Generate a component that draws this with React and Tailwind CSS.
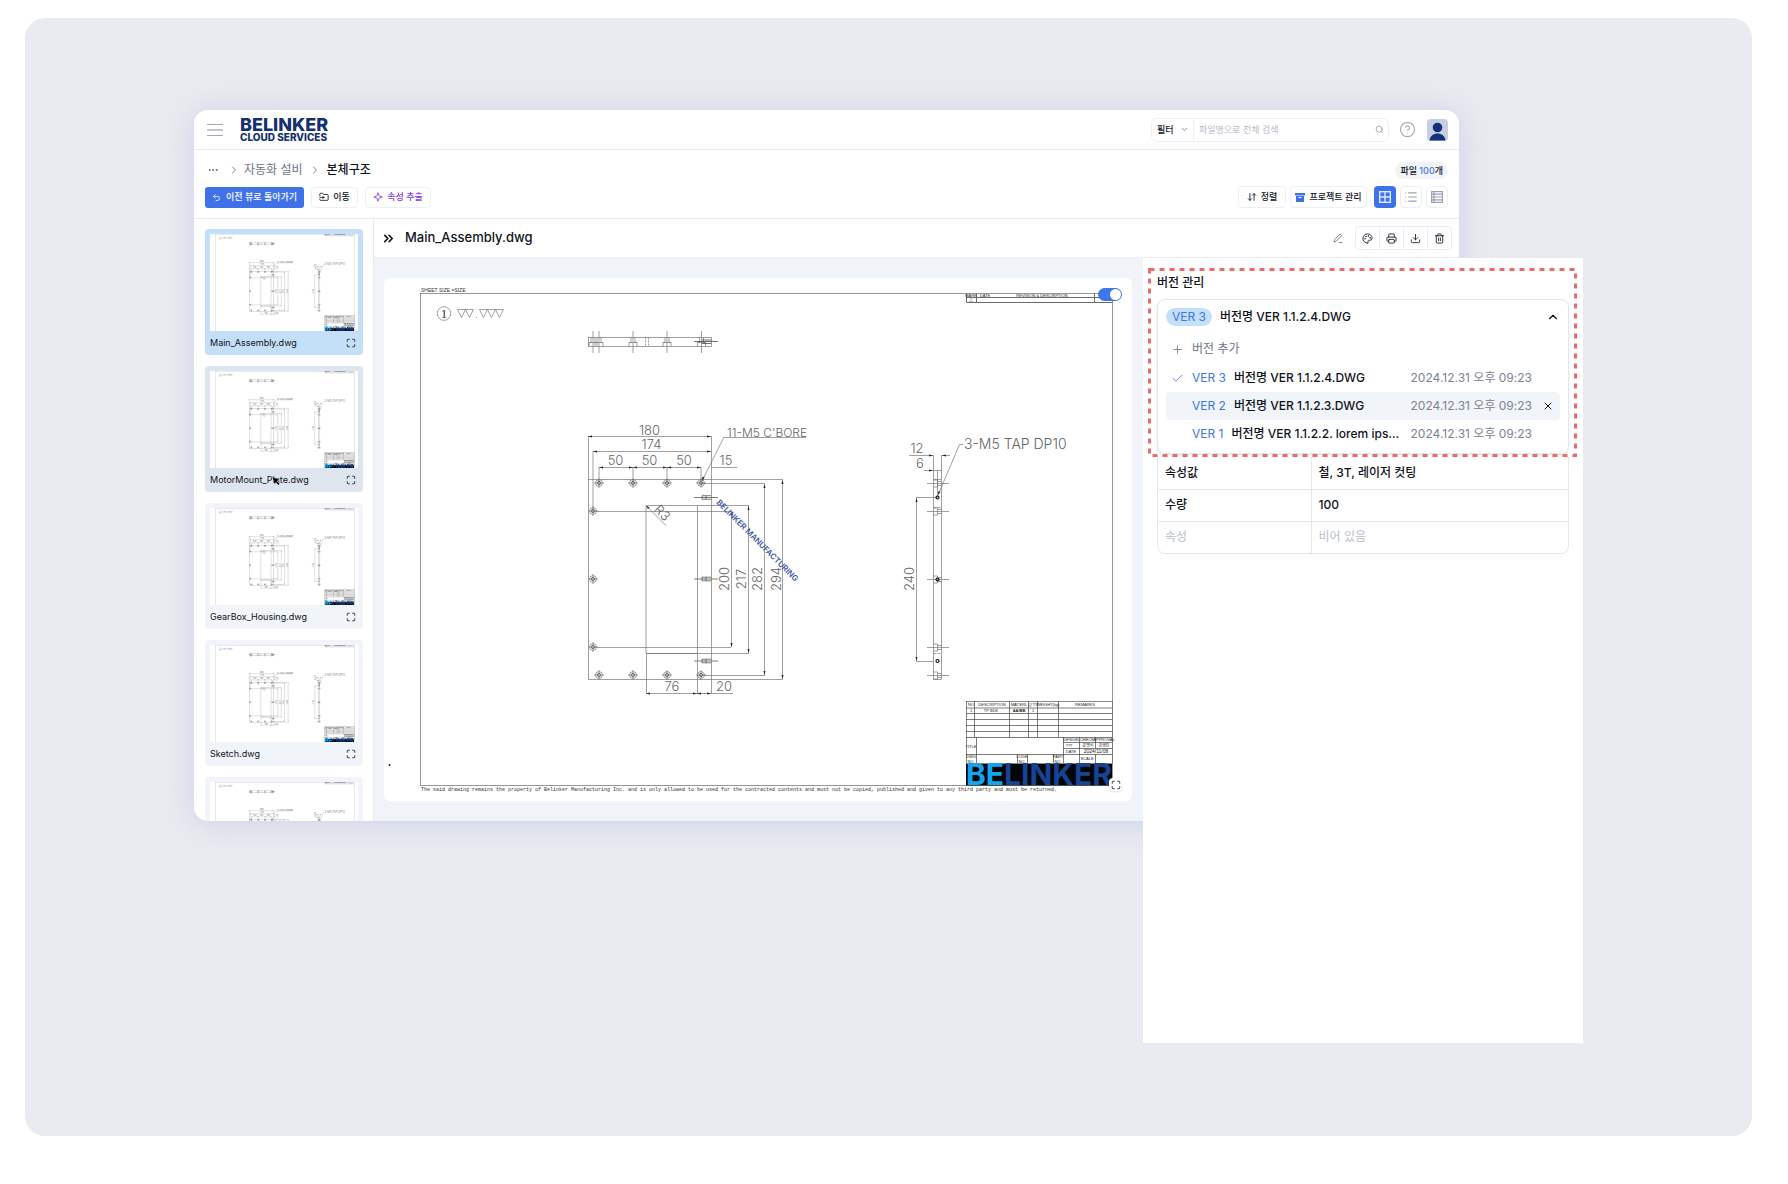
import { useState } from "react";
import {
  ArrowDownUp,
  Check,
  ChevronDown,
  ChevronRight,
  ChevronUp,
  ChevronsRight,
  CircleHelp,
  Download,
  Ellipsis,
  FolderInput,
  List,
  Maximize,
  Palette,
  Plus,
  Printer,
  Search,
  Sparkle,
  Trash2,
  Undo2,
  X
} from "lucide-react";

const files = [
  "Main_Assembly.dwg",
  "MotorMount_Plate.dwg",
  "GearBox_Housing.dwg",
  "Sketch.dwg",
  "Bracket.dwg"
];

const versions = [
  { id: 3, name: "버전명 VER 1.1.2.4.DWG", date: "2024.12.31 오후 09:23" },
  { id: 2, name: "버전명 VER 1.1.2.3.DWG", date: "2024.12.31 오후 09:23" },
  { id: 1, name: "버전명 VER 1.1.2.2. lorem ips...", date: "2024.12.31 오후 09:23" }
];

const attributes = [
  { label: "속성값", value: "철, 3T, 레이저 컷팅" },
  { label: "수량", value: "100" },
  { label: "속성", value: "비어 있음", empty: true }
];

export default function App() {
  const [selected, setSelected] = useState(0);

  return (
    <div className="bg-white pt-[18px] pl-[25px] pr-9 pb-12 font-['Inter','Noto_Sans_CJK_KR',sans-serif] text-[#10131c]">
      <main className="rounded-[20px] bg-[#eaebf0] px-[169px] pt-[92px] pb-[93px] grid grid-cols-[minmax(0,1fr)_316px_124px]">

        {/* WINDOW */}
        <div className="col-start-1 col-span-2 row-start-1 self-start bg-white rounded-[14px] overflow-hidden shadow-[0_2px_32px_rgba(130,145,215,0.3)]">
          <Header />
          <Toolbar />

          <div className="flex">
            <aside className="w-[180px] shrink-0 contain-size overflow-hidden border-r border-[#e6eaf1] pl-[11px] pt-[10px] flex flex-col gap-[11px]">
              {files.map((name, index) => (
                <FileCard
                  key={name}
                  name={name}
                  index={index}
                  active={selected === index}
                  onSelect={() => setSelected(index)}
                />
              ))}
            </aside>

            <section className="flex-1 min-w-0">
              <ViewerHeader name={files[selected]} />
              <div className="bg-[#f0f4f8] pt-5 pb-5 pl-[10px] pr-[327px]">
                <div className="relative bg-white rounded-md">
                  <Drawing viewBox="384 278 748 523" line={1} />
                  <input
                    type="checkbox"
                    role="switch"
                    aria-label="레이어 표시"
                    defaultChecked
                    className="absolute right-[10px] top-[10px] appearance-none w-6 h-[13px] rounded-full bg-[#3f76ec] flex items-center justify-end pr-px after:block after:w-[11px] after:h-[11px] after:rounded-full after:bg-white"
                  />
                  <button
                    aria-label="전체 화면"
                    className="absolute right-[10px] bottom-[10px] w-[13px] h-[13px] bg-white rounded-sm shadow flex items-center justify-center"
                  >
                    <Maximize size={10} strokeWidth={2} />
                  </button>
                </div>
              </div>
            </section>
          </div>
        </div>

        {/* PANEL */}
        <VersionPanel />
      </main>
    </div>
  );
}

// HEADER

function Header() {
  return (
    <header className="h-10 border-b border-[#e9edf3] flex items-center pl-[13px] pr-[11px]">
      <button aria-label="메뉴" className="w-4 flex flex-col gap-1">
        <span className="h-[1px] bg-[#a3a7ba]" />
        <span className="h-[2px] bg-[#c3c6d3]" />
        <span className="h-[1px] bg-[#a3a7ba]" />
      </button>

      <a href="#" className="ml-[17px] flex flex-col text-[#143070] font-extrabold">
        <span className="text-[18px] leading-[15px]">BELINKER</span>
        <span className="text-[10px] leading-[11px]">CLOUD SERVICES</span>
      </a>

      <div className="ml-auto w-[238px] h-6 border border-[#edf0f5] rounded-md flex items-center">
        <div className="relative w-[42px] h-full border-r border-[#edf0f5] flex items-center">
          <select aria-label="필터" className="appearance-none w-full pl-[5px] text-[9px] font-medium bg-transparent">
            <option>필터</option>
          </select>
          <ChevronDown size={9} strokeWidth={2} className="absolute right-1 text-[#6d7385] pointer-events-none" />
        </div>
        <input
          type="text"
          aria-label="파일명 검색"
          placeholder="파일명으로 전체 검색"
          className="flex-1 min-w-0 pl-[5px] text-[9px] outline-none placeholder:text-[#b5bac8]"
        />
        <Search size={9} strokeWidth={2} className="mr-1 text-[#9298ab]" />
      </div>

      <button aria-label="도움말" className="ml-[10px] text-[#9ba1b8]">
        <CircleHelp size={17} strokeWidth={1.5} />
      </button>
      <button aria-label="프로필" className="ml-[11px]">
        <svg width="21" height="22" viewBox="0 0 21 22">
          <rect width="21" height="22" rx="4" fill="#c6cfe2" />
          <circle cx="10.5" cy="8.5" r="4.8" fill="#16317a" />
          <path d="M2.5 21.5C3 17 6.500 14.500 10.500 14.500S18 17 18.500 21.500Z" fill="#16317a" />
        </svg>
      </button>
    </header>
  );
}

function Toolbar() {
  return (
    <div className="h-[69px] border-b border-[#e9edf3] pt-[11px] pl-[11px] pr-[11px]">
      <div className="h-[18px] flex items-center justify-between">
        <nav className="flex items-center text-[12px]">
          <button aria-label="상위 폴더" className="ml-[2px] text-[#5c6375]">
            <Ellipsis size={12} strokeWidth={2} />
          </button>
          <ChevronRight size={12} strokeWidth={2} className="ml-[9px] text-[#7d8496]" />
          <a href="#" className="ml-[4px] text-[#6d7488]">자동화 설비</a>
          <ChevronRight size={12} strokeWidth={2} className="ml-[6px] text-[#7d8496]" />
          <span className="ml-[6px] font-medium">본체구조</span>
        </nav>
        <span className="h-[17px] px-[5px] rounded-full bg-[#f0f3f8] text-[9px] leading-[17px] font-medium">
          파일 <span className="text-[#3f76ec]">100</span>개
        </span>
      </div>

      <div className="mt-[7px] h-[22px] flex items-center text-[9px] font-medium whitespace-nowrap">
        <button className="h-[21px] w-[99px] rounded-[3px] bg-[#3f72e8] text-white flex items-center justify-center gap-[5px]">
          <Undo2 size={9} strokeWidth={2} />
          이전 뷰로 돌아가기
        </button>
        <button className="ml-[7px] h-[21px] w-[47px] rounded-[4px] border border-[#eceff4] flex items-center justify-center gap-1">
          <FolderInput size={10} strokeWidth={2} />
          이동
        </button>
        <button className="ml-[7px] h-[21px] w-[66px] rounded-[4px] border border-[#eceff4] text-[#8a3ddb] flex items-center justify-center gap-1">
          <Sparkle size={10} strokeWidth={2} />
          속성 추출
        </button>

        <button className="ml-auto h-[22px] w-12 rounded-[4px] border border-[#eceff4] flex items-center justify-center gap-1">
          <ArrowDownUp size={10} strokeWidth={2} />
          정렬
        </button>
        <button className="ml-1 h-[22px] w-[77px] rounded-[4px] border border-[#eceff4] flex items-center justify-center gap-1">
          <svg width="10" height="9" viewBox="0 0 10 9" fill="#3f72e8">
            <path d="M0 0h10v2.500H0z" />
            <path d="M1 3h8v6H1z" />
            <path d="M3.500 4.500h3" stroke="#fff" strokeWidth="1" />
          </svg>
          프로젝트 관리
        </button>
        <button aria-label="그리드 보기" className="ml-[7px] w-[22px] h-[22px] rounded-[4px] bg-[#3f72e8] flex items-center justify-center">
          <svg width="12" height="12" viewBox="0 0 12 12" fill="none" stroke="#dfe9ff" strokeWidth="1.4">
            <rect x="0.700" y="0.700" width="10.600" height="10.600" />
            <path d="M6 0v12M0 6h12" />
          </svg>
        </button>
        <button aria-label="목록 보기" className="ml-1 w-[22px] h-[22px] rounded-[4px] border border-[#eceff4] text-[#9ba1b8] flex items-center justify-center">
          <List size={14} strokeWidth={2} />
        </button>
        <button aria-label="표 보기" className="ml-1 w-[22px] h-[22px] rounded-[4px] border border-[#eceff4] flex items-center justify-center">
          <svg width="12" height="12" viewBox="0 0 12 12" fill="none" stroke="#9ba1b8" strokeWidth="1.200">
            <rect x="0.600" y="0.600" width="10.800" height="10.800" />
            <path d="M3 0v12M0 3.200h12M0 6h12M0 8.800h12" />
          </svg>
        </button>
      </div>
    </div>
  );
}

// SIDEBAR

function FileCard({ name, index, active, onSelect }) {
  const color = active ? "bg-[#c3e0f8]" : index === 1 ? "bg-[#dfe5ef]" : "bg-[#f1f4f8]";
  return (
    <div className={`relative w-[158px] h-[126px] shrink-0 rounded-[4px] p-[5px] ${color}`}>
      <button onClick={onSelect} aria-label={name} className="block w-full bg-white">
        <Drawing viewBox="392 293 740 485" line={1.6} thumb />
      </button>
      <div className="h-[23px] pr-[2px] flex items-center justify-between text-[9px]">
        <span>{name}</span>
        <button aria-label="크게 보기"><Maximize size={10} strokeWidth={2} /></button>
      </div>
      {index === 1 && (
        <svg width="10" height="10" viewBox="0 0 10 10" className="absolute left-[66px] top-[110px]">
          <path d="M1 0.500 9 3.800 6.200 5 8.800 7.800 7.400 9.200 4.900 6.500 3.700 9Z" fill="#05070c" stroke="#fff" strokeWidth="0.500" />
        </svg>
      )}
    </div>
  );
}

// VIEWER

function ViewerHeader({ name }) {
  return (
    <div className="h-[39px] border-b border-[#e9edf3] flex items-center pl-[7px] pr-[7px]">
      <button aria-label="패널 접기"><ChevronsRight size={15} strokeWidth={2.5} /></button>
      <h1 className="ml-[9px] text-[13px] font-medium">{name}</h1>

      <button aria-label="이름 수정" className="ml-auto mr-3 text-[#70778a]">
        <svg width="10" height="10" viewBox="0 0 10 10" fill="none" stroke="currentColor" strokeWidth="0.900">
          <path d="M1 9 1.600 6.700 7 0.900 8.700 2.500 3.200 8.200ZM6 9.400h3.500" />
        </svg>
      </button>
      <div className="h-6 flex border border-[#e9edf3] rounded-[4px] divide-x divide-[#e9edf3] text-[#222733]">
        <button aria-label="색상" className="w-6 flex items-center justify-center"><Palette size={11} strokeWidth={2} /></button>
        <button aria-label="인쇄" className="w-6 flex items-center justify-center"><Printer size={11} strokeWidth={2} /></button>
        <button aria-label="다운로드" className="w-6 flex items-center justify-center"><Download size={11} strokeWidth={2} /></button>
        <button aria-label="삭제" className="w-[23px] flex items-center justify-center"><Trash2 size={11} strokeWidth={2} /></button>
      </div>
    </div>
  );
}

// VERSION PANEL

function VersionPanel() {
  return (
    <section className="col-start-2 col-span-2 row-start-1 mt-[148px] min-h-[785px] bg-white z-10 pt-[10px] pl-[5px] pr-[6px]">
      <div className="relative pl-[9px] pr-2 pt-[6px] pb-1">
        <h2 className="text-[12px] leading-[18px] font-medium">버전 관리</h2>

        <div className="mt-[7px] -mb-px border border-[#e3e8f0] rounded-lg px-2 pt-2 pb-[5px] shadow-sm text-[12px] leading-[18px] whitespace-nowrap">
          <button className="w-full flex items-center font-medium">
            <span className="h-[18px] px-[6px] rounded-full bg-[#c3e0f8] text-[#3f76ec] font-normal">VER 3</span>
            <span className="ml-2">버전명 VER 1.1.2.4.DWG</span>
            <ChevronUp size={14} strokeWidth={2} className="ml-auto" />
          </button>

          <button className="mt-[9px] h-7 flex items-center text-[#6d7488]">
            <Plus size={13} strokeWidth={1.5} className="ml-[5px] mr-2" />
            버전 추가
          </button>

          <ul className="mt-px">
            {versions.map((v) => (
              <li
                key={v.id}
                className={`h-7 flex items-center rounded-[4px] ${v.id === 2 ? "bg-[#f1f4f8]" : ""}`}
              >
                <span className="w-[26px] shrink-0 pl-[5px] text-[#3f76ec]">
                  {v.id === 3 && <Check size={13} strokeWidth={1.5} />}
                </span>
                <span className="text-[#3f76ec]">VER {v.id}</span>
                <span className="ml-2 font-medium">{v.name}</span>
                <span className="ml-auto text-[#7c8294]">{v.date}</span>
                <span className="w-7 shrink-0 pl-[10px]">
                  {v.id === 2 && (
                    <button aria-label="버전 삭제" className="block"><X size={12} strokeWidth={2} /></button>
                  )}
                </span>
              </li>
            ))}
          </ul>
        </div>

        {/* highlight frame */}
        <svg className="absolute inset-0 w-full h-full pointer-events-none overflow-visible" fill="none" stroke="#ec6b6b" strokeWidth="3" strokeDasharray="5 5">
          <rect x="1.5" y="1.5" className="w-[calc(100%-3px)] h-[calc(100%-3px)]" />
        </svg>
      </div>

      <div className="ml-[9px] mr-2 border border-t-0 border-[#e3e8f0] rounded-b-lg">
        <table className="w-full text-[12px] leading-[18px]">
          <tbody>
            {attributes.map((a) => (
              <tr
                key={a.label}
                className={`h-8 not-last:border-b border-[#e3e8f0] ${a.empty ? "text-[#b9bfcc]" : ""}`}
              >
                <th scope="row" className={`w-[153px] pl-[7px] text-left border-r border-[#e3e8f0] ${a.empty ? "font-normal" : "font-medium"}`}>{a.label}</th>
                <td className={`pl-[7px] ${a.empty ? "font-normal" : "font-medium"}`}>{a.value}</td>
              </tr>
            ))}
          </tbody>
        </table>
      </div>
    </section>
  );
}

// DRAWING

function Dim({ x1, y1, x2, y2 }) {
  const flat = y1 === y2;
  return (
    <>
      <path d={`M${x1} ${y1}L${x2} ${y2}`} />
      {flat ? (
        <path fill="#222" stroke="none" d={`M${x1} ${y1}l4 -1v2zM${x2} ${y2}l-4 -1v2z`} />
      ) : (
        <path fill="#222" stroke="none" d={`M${x1} ${y1}l-1 4h2zM${x2} ${y2}l-1 -4h2z`} />
      )}
    </>
  );
}

function Hole({ x, y }) {
  return (
    <>
      <circle cx={x} cy={y} r="3.4" />
      <circle cx={x} cy={y} r="1.6" strokeWidth="0.8" stroke="#444" />
      <path d={`M${x - 5} ${y}h10M${x} ${y - 5}v10`} />
    </>
  );
}

// vertical dimension label, read from the bottom up
function VText({ x, y, children }) {
  return <text transform={`translate(${x} ${y}) rotate(-90)`} textAnchor="middle">{children}</text>;
}

const holes = [
  [599, 483], [633, 483], [667, 483], [701, 483],
  [593, 511], [593, 579], [593, 647],
  [599, 675], [633, 675], [667, 675], [701, 675]
];

function Drawing({ viewBox, line, thumb }) {
  return (
    <svg viewBox={viewBox} className="block w-full" fill="none" stroke="#777" strokeWidth={line * 0.7}>
      {/* frame */}
      <g stroke={thumb ? "#999" : "#6b6b6b"}>
        <rect x="420.5" y="293.5" width="692" height="492" />
        <path strokeWidth={line} d="M966.5 293.5v9h146M966.5 297.5h146M976.500 293.500v9M1094.500 293.500v9" />
      </g>
      <circle cx="444" cy="313.500" r="6.800" />
      <path d="M457.500 309.500h8l-4 8zM465.500 309.500h8l-4 8zM479.500 309.500h8l-4 8zM487.500 309.500h8l-4 8zM495.500 309.500h8l-4 8zM476 317.500h1" />
      <circle cx="389.500" cy="765" r="0.900" fill="#111" stroke="none" />

      {/* top view */}
      <rect x="588.500" y="337.500" width="123" height="9" />
      {[593, 599, 633, 667, 701.5].map((x) => (
        <path key={x} d={`M${x} 331v22M${x - 2} 337.500v5h-2v4M${x + 2} 337.500v5h2v4M${x - 4} 342.500h8`} />
      ))}
      <path strokeDasharray="2 1" d="M645.500 337.500v9M648.500 337.500v9" />
      <path stroke="#333" d="M694 341.500h24M702 340h9M702 343.500h9" />

      {/* front view */}
      <rect x="588.500" y="479.500" width="123" height="200" />
      <rect x="646" y="505.500" width="51.500" height="148" rx="1.500" />
      {holes.map(([x, y]) => <Hole key={`${x}-${y}`} x={x} y={y} />)}
      {[497.5, 579, 661].map((y) => (
        <path key={y} stroke="#444" d={`M694 ${y}h24M702 ${y - 1.800}h9M702 ${y + 1.800}h9M702 ${y - 1.800}v3.600M706 ${y - 1.800}v3.600`} />
      ))}
      <path d="M588.500 436v43M711.500 436v43M593 451v60M599 467v16M633 467v16M667 467v16M701 467v16" />
      <path d="M711.500 467.500h26M724 437.500h82M724 437l-22 44" />
      <path d="M593 511.500h138M593 647.500h138M697 505.500h52M646 653.500h103M701 483.500h64M701 675.500h64M711 479.500h72M711 679.500h72" />
      <path d="M646.500 653v41M697.500 653v41M711.500 679v15M711 693.500h22M646 505.500l20 20" />
      <Dim x1={588} y1={436.5} x2={711} y2={436.5} />
      <Dim x1={593} y1={451.5} x2={711} y2={451.5} />
      <Dim x1={599} y1={467.5} x2={633} y2={467.5} />
      <Dim x1={633} y1={467.5} x2={667} y2={467.5} />
      <Dim x1={667} y1={467.5} x2={701} y2={467.5} />
      <Dim x1={731.5} y1={511} x2={731.5} y2={647} />
      <Dim x1={748.5} y1={506} x2={748.5} y2={653} />
      <Dim x1={764.5} y1={484} x2={764.5} y2={675} />
      <Dim x1={782.5} y1={480} x2={782.5} y2={679} />
      <Dim x1={646} y1={693.5} x2={697} y2={693.5} />
      <Dim x1={697} y1={693.5} x2={711} y2={693.5} />
      <path fill="#222" stroke="none" d="M702 481l0.500 -4.500 2 1zM646 505.500l3.500 2 -1.500 1.500z" />

      {/* side view */}
      <rect x="933.500" y="479.500" width="8" height="200" />
      <path d="M933.500 455v24M941.500 455v24M909 455.500h24M942 455.500h8M924 470.500h18M937.500 470.500v27M916 497.500h21M916 661.500h17" />
      <path d="M963 444.500h-3.500L937 497.500" />
      {[483.5, 511.5, 579.5, 647.5, 675.5].map((y) => (
        <path key={y} d={`M927 ${y}h22M933.500 ${y - 3.500}h4v7h-4M937.500 ${y - 2}h4M937.500 ${y + 2}h4`} />
      ))}
      {[497.5, 579.5, 661].map((y) => (
        <circle key={y} cx="937.500" cy={y} r="1.500" stroke="#111" strokeWidth="1.200" />
      ))}
      <path strokeDasharray="3 1" d="M933.500 507.500h8M933.500 653.500h8" />
      <path fill="#222" stroke="none" d="M933 455.500l-4 -1v2zM942 455.500l4 -1v2zM933 470.500l-4 -1v2zM938 495l0.500 -4 2 1z" />
      <Dim x1={916.5} y1={498} x2={916.5} y2={661} />

      {/* dimension labels */}
      <g fill="#666" stroke="none" className="font-['Inter'] text-[13px] font-light" textAnchor="middle">
        <text x="649.500" y="435">180</text>
        <text x="651.500" y="449">174</text>
        <text x="615.500" y="465">50</text>
        <text x="649.500" y="465">50</text>
        <text x="684" y="465">50</text>
        <text x="726" y="465">15</text>
        <text x="672" y="691">76</text>
        <text x="724" y="691">20</text>
        <text x="917" y="453">12</text>
        <text x="920" y="468">6</text>
        <VText x={729} y={579}>200</VText>
        <VText x={746} y={579}>217</VText>
        <VText x={762} y={579}>282</VText>
        <VText x={781} y={579}>294</VText>
        <VText x={914} y={579}>240</VText>
        <text transform="translate(659 516) rotate(45)">R3</text>
        <text x="964" y="449" textAnchor="start" className="text-[14px]">3-M5 TAP DP10</text>
        <text x="727" y="437" textAnchor="start" className="text-[12px]">11-M5 C'BORE</text>
      </g>
      {!thumb && (
        <text transform="translate(716 503) rotate(45)" fill="#3f5aa8" stroke="none" className="font-['Inter'] text-[8px] font-semibold">
          BELINKER MANUFACTURING
        </text>
      )}

      {/* title block */}
      <rect x="966.500" y="701.500" width="146" height="62" fill="#fff" stroke="#555" />
      <path
        stroke="#444"
        d="M966 708h146M966 713.500h146M966 719.500h146M966 725.500h146M966 731.500h146M966 737.500h146M974.500 701v36M1009.500 701v36M1028.500 701v36M1037.500 701v36M1058.500 701v36M976.500 737v26M1063.500 737v26M1079.500 737v26M1095.500 737v11M1095.500 754v9M1063 742.500h49M1063 748.500h49M966 754.500h146M1017.500 754v9M1027.500 754v9M1053.500 754v9"
      />
      <g fill="#222" stroke="none" className="font-['Liberation_Sans','Noto_Sans_CJK_KR'] text-[4px]" textAnchor="middle">
        <text x="971" y="706">NO</text>
        <text x="992" y="706">DESCRIPTION</text>
        <text x="1019" y="706">MAT'ERL</text>
        <text x="1033" y="706">Q'TY</text>
        <text x="1048" y="706">WEIGHT(kg)</text>
        <text x="1085" y="706">REMARKS</text>
        <text x="971" y="712">1</text>
        <text x="991" y="712">TP BDK</text>
        <text x="1019" y="712" className="font-bold">AA/BB</text>
        <text x="1033" y="712">1</text>
        <text x="971" y="748">TITLE</text>
        <text x="1071" y="741">DESIGN</text>
        <text x="1087" y="741">CHECK</text>
        <text x="1104" y="741">APPROVAL</text>
        <text x="1069" y="747">???</text>
        <text x="1088" y="747">문명식</text>
        <text x="1104" y="747">강영민</text>
        <text x="1071" y="753">DATE</text>
        <text x="1096" y="753" className="text-[5px]">2024/11/08</text>
        <text x="971" y="758">DWG</text>
        <text x="971" y="763">NO.</text>
        <text x="1022" y="758">CODE</text>
        <text x="1022" y="763">NO.</text>
        <text x="1058" y="758">PART</text>
        <text x="1058" y="763">NO.</text>
        <text x="1087" y="760">SCALE</text>
        <text x="971" y="297">MARK</text>
        <text x="985" y="297">DATE</text>
        <text x="1042" y="297">REVISION &amp; DESCRIPTION</text>
        <text x="971" y="302">△</text>
      </g>
      <rect x="966" y="764" width="146" height="21.500" fill="#030507" stroke="none" />
      <text x="966" y="785" stroke="none" className="font-['Inter'] text-[30px] font-bold">
        <tspan fill="#12a5ef">BE</tspan>
        <tspan fill="#164394">LINKER</tspan>
      </text>

      <g fill="#333" stroke="none" className="text-[5px]">
        <text x="421" y="292" className="font-['Liberation_Sans']">SHEET SIZE =SIZE</text>
        <text x="421" y="791" className="font-['Liberation_Mono']">
          The said drawing remains the property of Belinker Manufacturing Inc. and is only allowed to be used for the contracted contents and must not be copied, published and given to any third party and must be returned.
        </text>
        <text x="444" y="318" textAnchor="middle" className="font-['Liberation_Serif'] text-[13px]">1</text>
      </g>
    </svg>
  );
}
